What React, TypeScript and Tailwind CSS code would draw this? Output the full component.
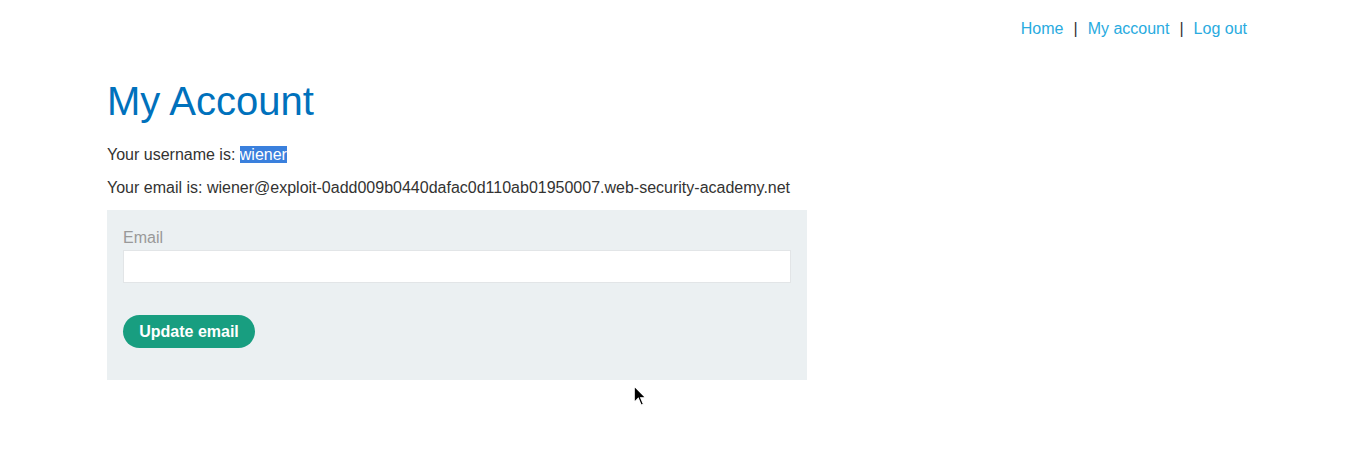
export default function App() {
  return (
    <div className="relative min-h-[459px] bg-white font-['Liberation_Sans',Arial,sans-serif] text-[16px] text-[#333332]">
      <header className="flex justify-end pt-[17px] pr-[99px] leading-6">
        <a href="#" className="text-[#29abe0]">Home</a>
        <span className="px-[10px]">|</span>
        <a href="#" className="text-[#29abe0]">My account</a>
        <span className="px-[10px]">|</span>
        <a href="#" className="text-[#29abe0]">Log out</a>
      </header>

      <main className="pl-[107px]">
        <h1 className="mt-[35px] text-[40px] leading-[50px] font-normal text-[#0071bc]">My Account</h1>
        <p className="mt-[17px] leading-6">
          Your username is: <span className="bg-[#3a80dd] text-white">wiener</span>
        </p>
        <p className="mt-[9px] leading-6">
          Your email is: wiener@exploit-0add009b0440dafac0d110ab01950007.web-security-academy.net
        </p>

        <form className="mt-[10px] flex w-[700px] flex-col bg-[#ebf0f2] px-4 pt-4 pb-8">
          <label className="leading-6 text-[#999999]">Email</label>
          <input
            type="email"
            className="h-[33px] w-full border border-[#e2e5e7] bg-white px-2 outline-none"
          />
          <button
            type="button"
            className="mt-8 h-[33px] w-[132px] rounded-full bg-[#189e80] font-bold text-white"
          >
            Update email
          </button>
        </form>
      </main>

      <svg
        className="absolute left-[633px] top-[385px]"
        width="14"
        height="22"
        viewBox="0 0 12 19"
      >
        <path
          d="M1 1 L1 15 L4.5 11.5 L7 17.5 L9 16.6 L6.6 11 L11 11 Z"
          fill="#000"
          stroke="#fff"
          strokeWidth="1"
        />
      </svg>
    </div>
  );
}
